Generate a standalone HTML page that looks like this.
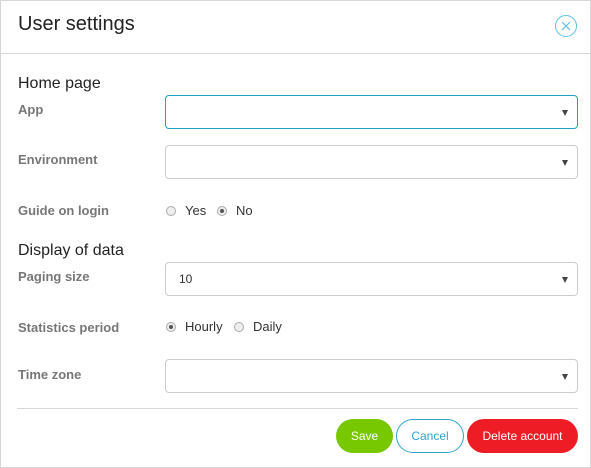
<!DOCTYPE html><html><head><style>
body{margin:0;width:591px;height:468px;background:#fff;font-family:"Liberation Sans",sans-serif;position:relative;overflow:hidden}
.a{position:absolute}
.frame{left:0;top:0;width:589px;height:466px;border:1px solid #d6d6d6}
.lbl{font-size:13px;font-weight:bold;color:#777;left:18px}
.sec{font-size:16px;color:#222;left:18px}
.sel{left:165px;height:34px;border:1px solid #ccc;border-radius:4px;box-sizing:border-box;width:413px}
.sel::after{content:"";position:absolute;right:9px;top:14px;border-left:3.5px solid transparent;border-right:3.5px solid transparent;border-top:6px solid #444}
.rad{width:10px;height:10px;border:1px solid #aaa;border-radius:50%;background:#eee;box-sizing:border-box}
.rad.on::after{content:"";position:absolute;left:2px;top:2px;width:4px;height:4px;border-radius:50%;background:#555}
.t{font-size:13px;color:#333}
.btn{height:34px;border-radius:17px;font-size:12px;line-height:34px;text-align:center;box-sizing:border-box;top:419px}
</style></head><body>
<div class="a frame"></div>
<div class="a" style="left:18px;top:13px;font-size:20px;color:#222">User settings</div>
<div class="a" style="left:555px;top:15px;width:20px;height:20px;border:1px solid #5bc0de;border-radius:50%"><svg width="20" height="20" style="position:absolute;left:0;top:0"><path d="M6 6L14 14M14 6L6 14" stroke="#5bc0de" stroke-width="1.2"/></svg></div>
<div class="a" style="left:1px;top:53px;width:589px;height:1px;background:#d6d6d6"></div>
<div class="a sec" style="top:75px">Home page</div>
<div class="a lbl" style="top:102px">App</div>
<div class="a sel" style="top:95px;border-color:#1fa0c8"></div>
<div class="a lbl" style="top:152px">Environment</div>
<div class="a sel" style="top:145px"></div>
<div class="a lbl" style="top:203px">Guide on login</div>
<div class="a rad" style="left:166px;top:206px"></div><div class="a t" style="left:185px;top:203px">Yes</div>
<div class="a rad on" style="left:217px;top:206px"></div><div class="a t" style="left:236px;top:203px">No</div>
<div class="a sec" style="top:242px">Display of data</div>
<div class="a lbl" style="top:269px">Paging size</div>
<div class="a sel" style="top:262px"><span class="t" style="position:absolute;left:13px;top:9px;font-size:12px">10</span></div>
<div class="a lbl" style="top:320px">Statistics period</div>
<div class="a rad on" style="left:166px;top:322px"></div><div class="a t" style="left:185px;top:319px">Hourly</div>
<div class="a rad" style="left:234px;top:322px"></div><div class="a t" style="left:253px;top:319px">Daily</div>
<div class="a lbl" style="top:367px">Time zone</div>
<div class="a sel" style="top:359px"></div>
<div class="a" style="left:17px;top:408px;width:561px;height:1px;background:#d6d6d6"></div>
<div class="a btn" style="left:336px;width:57px;background:#78c800;color:#fff">Save</div>
<div class="a btn" style="left:396px;width:68px;border:1px solid #2fa4d0;color:#2fa4d0;line-height:32px">Cancel</div>
<div class="a btn" style="left:467px;width:111px;background:#ee1c25;color:#fff">Delete account</div>
</body></html>
